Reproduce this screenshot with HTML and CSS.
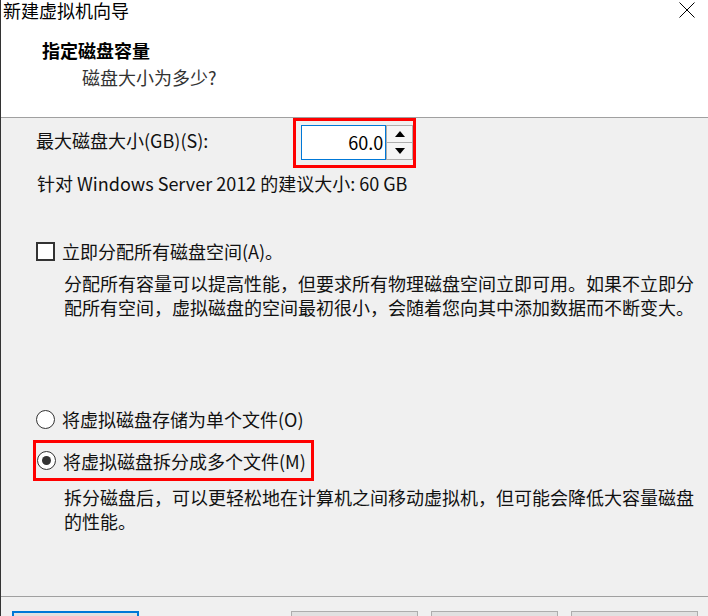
FILE: index.html
```html
<!DOCTYPE html>
<html lang="zh-CN">
<head>
<meta charset="utf-8">
<title>新建虚拟机向导</title>
<link rel="stylesheet" href="styles.css">
</head>
<body>
<div class="window">
  <div class="titlebar">
    <span class="title">新建虚拟机向导</span>
    <svg class="close" width="16" height="16" viewBox="0 0 16 16"><path d="M0.5 0.5 L15.5 15.5 M15.5 0.5 L0.5 15.5" stroke="#000" stroke-width="1" fill="none"/></svg>
  </div>
  <div class="header">
    <div class="heading">指定磁盘容量</div>
    <div class="subheading">磁盘大小为多少?</div>
  </div>
  <div class="content">
    <div class="size-row">
      <span class="label size-label">最大磁盘大小(GB)(S):</span>
      <div class="highlight spin-box">
        <div class="input">60.0</div>
        <div class="spin">
          <div class="spin-btn"><svg width="10" height="6" viewBox="0 0 10 6"><path d="M5 0 L10 6 L0 6 Z" fill="#000"/></svg></div>
          <div class="spin-btn"><svg width="10" height="6" viewBox="0 0 10 6"><path d="M0 0 L10 0 L5 6 Z" fill="#000"/></svg></div>
        </div>
      </div>
    </div>
    <div class="label recommend">针对 Windows Server 2012 的建议大小: 60 GB</div>
    <div class="option check-row">
      <span class="checkbox"></span>
      <span class="label">立即分配所有磁盘空间(A)。</span>
    </div>
    <p class="desc desc-alloc">分配所有容量可以提高性能，但要求所有物理磁盘空间立即可用。如果不立即分配所有空间，虚拟磁盘的空间最初很小，会随着您向其中添加数据而不断变大。</p>
    <div class="option radio-row">
      <span class="radio"></span>
      <span class="label">将虚拟磁盘存储为单个文件(O)</span>
    </div>
    <div class="highlight option radio-row selected-row">
      <span class="radio checked"><span class="dot"></span></span>
      <span class="label">将虚拟磁盘拆分成多个文件(M)</span>
    </div>
    <p class="desc desc-split">拆分磁盘后，可以更轻松地在计算机之间移动虚拟机，但可能会降低大容量磁盘的性能。</p>
  </div>
  <div class="footer">
    <div class="btn primary"></div>
    <div class="btn-group">
      <div class="btn"></div>
      <div class="btn"></div>
      <div class="btn"></div>
    </div>
  </div>
</div>
</body>
</html>
```
FILE: styles.css
```css
* { box-sizing: border-box; }
html, body {
  margin: 0;
  padding: 0;
  background: #f0f0f0;
}
body {
  font-family: "Noto Sans CJK SC", "Noto Sans", sans-serif;
  color: #000;
}
.window {
  width: 708px;
  height: 616px;
  overflow: hidden;
  border-left: 1px solid #333;
  display: flex;
  flex-direction: column;
}
.titlebar {
  height: 20px;
  background: #fff;
  display: flex;
  justify-content: space-between;
  align-items: flex-start;
  padding-left: 2px;
}
.title {
  font-size: 18px;
  line-height: 20px;
}
.close {
  margin-top: 2px;
  margin-right: 13px;
}
.header {
  height: 97px;
  background: #fff;
  padding-top: 18px;
}
.heading {
  font-size: 18px;
  line-height: 24px;
  font-weight: bold;
  padding-left: 41px;
}
.subheading {
  font-size: 18px;
  line-height: 24px;
  margin-top: 3px;
  padding-left: 81px;
  color: #333;
}
.content {
  flex: 1;
  border-top: 1px solid #a0a0a0;
  background: #f0f0f0;
  padding-left: 35px;
}
.label {
  font-size: 18px;
  line-height: 24px;
  color: #111;
}
.size-row {
  display: flex;
  align-items: center;
  height: 50px;
}
.size-label {
  width: 257px;
  margin-top: -6px;
}
.highlight {
  border: 3px solid #ff0000;
}
.spin-box {
  width: 123px;
  height: 50px;
  display: flex;
  align-items: flex-start;
  padding: 4px 0 0 5px;
}
.input {
  width: 86px;
  height: 35px;
  border: 1px solid #0078d7;
  background: #fff;
  font-size: 18px;
  line-height: 33px;
  text-align: right;
  padding-right: 2px;
}
.spin {
  width: 27px;
  height: 35px;
  border: 1px solid #adadad;
  display: flex;
  flex-direction: column;
  background: #f5f5f5;
}
.spin-btn {
  flex: 1;
  display: flex;
  align-items: center;
  justify-content: center;
}
.spin-btn + .spin-btn {
  border-top: 1px solid #adadad;
}
.recommend {
  margin-top: 3px;
  padding-left: 1px;
}
.option {
  display: flex;
  align-items: center;
  gap: 7px;
}
.check-row {
  margin-top: 44px;
}
.checkbox {
  width: 19px;
  height: 19px;
  border: 2px solid #333;
  background: #fff;
  flex: none;
}
.desc {
  margin: 8px 0 0 28px;
  width: 640px;
  font-size: 18px;
  line-height: 24px;
  color: #111;
}
.radio-row {
  margin-top: 88px;
}
.radio {
  width: 19px;
  height: 19px;
  border: 1.5px solid #333;
  border-radius: 50%;
  background: #fff;
  flex: none;
  display: flex;
  align-items: center;
  justify-content: center;
}
.dot {
  width: 9px;
  height: 9px;
  border-radius: 50%;
  background: #333;
}
.selected-row {
  margin-top: 9px;
  margin-left: -3px;
  width: 281px;
  height: 41px;
  padding: 0 0 0 1px;
}
.desc-split {
  margin-top: 4px;
}
.footer {
  height: 20px;
  flex: none;
  border-top: 1px solid #a0a0a0;
  display: flex;
  padding: 14px 10px 0 11px;
}
.btn {
  width: 127px;
  height: 26px;
  border: 1px solid #adadad;
  background: #e1e1e1;
}
.btn.primary {
  border: 2px solid #0078d7;
}
.btn-group {
  margin-left: auto;
  display: flex;
  gap: 13px;
}
```
